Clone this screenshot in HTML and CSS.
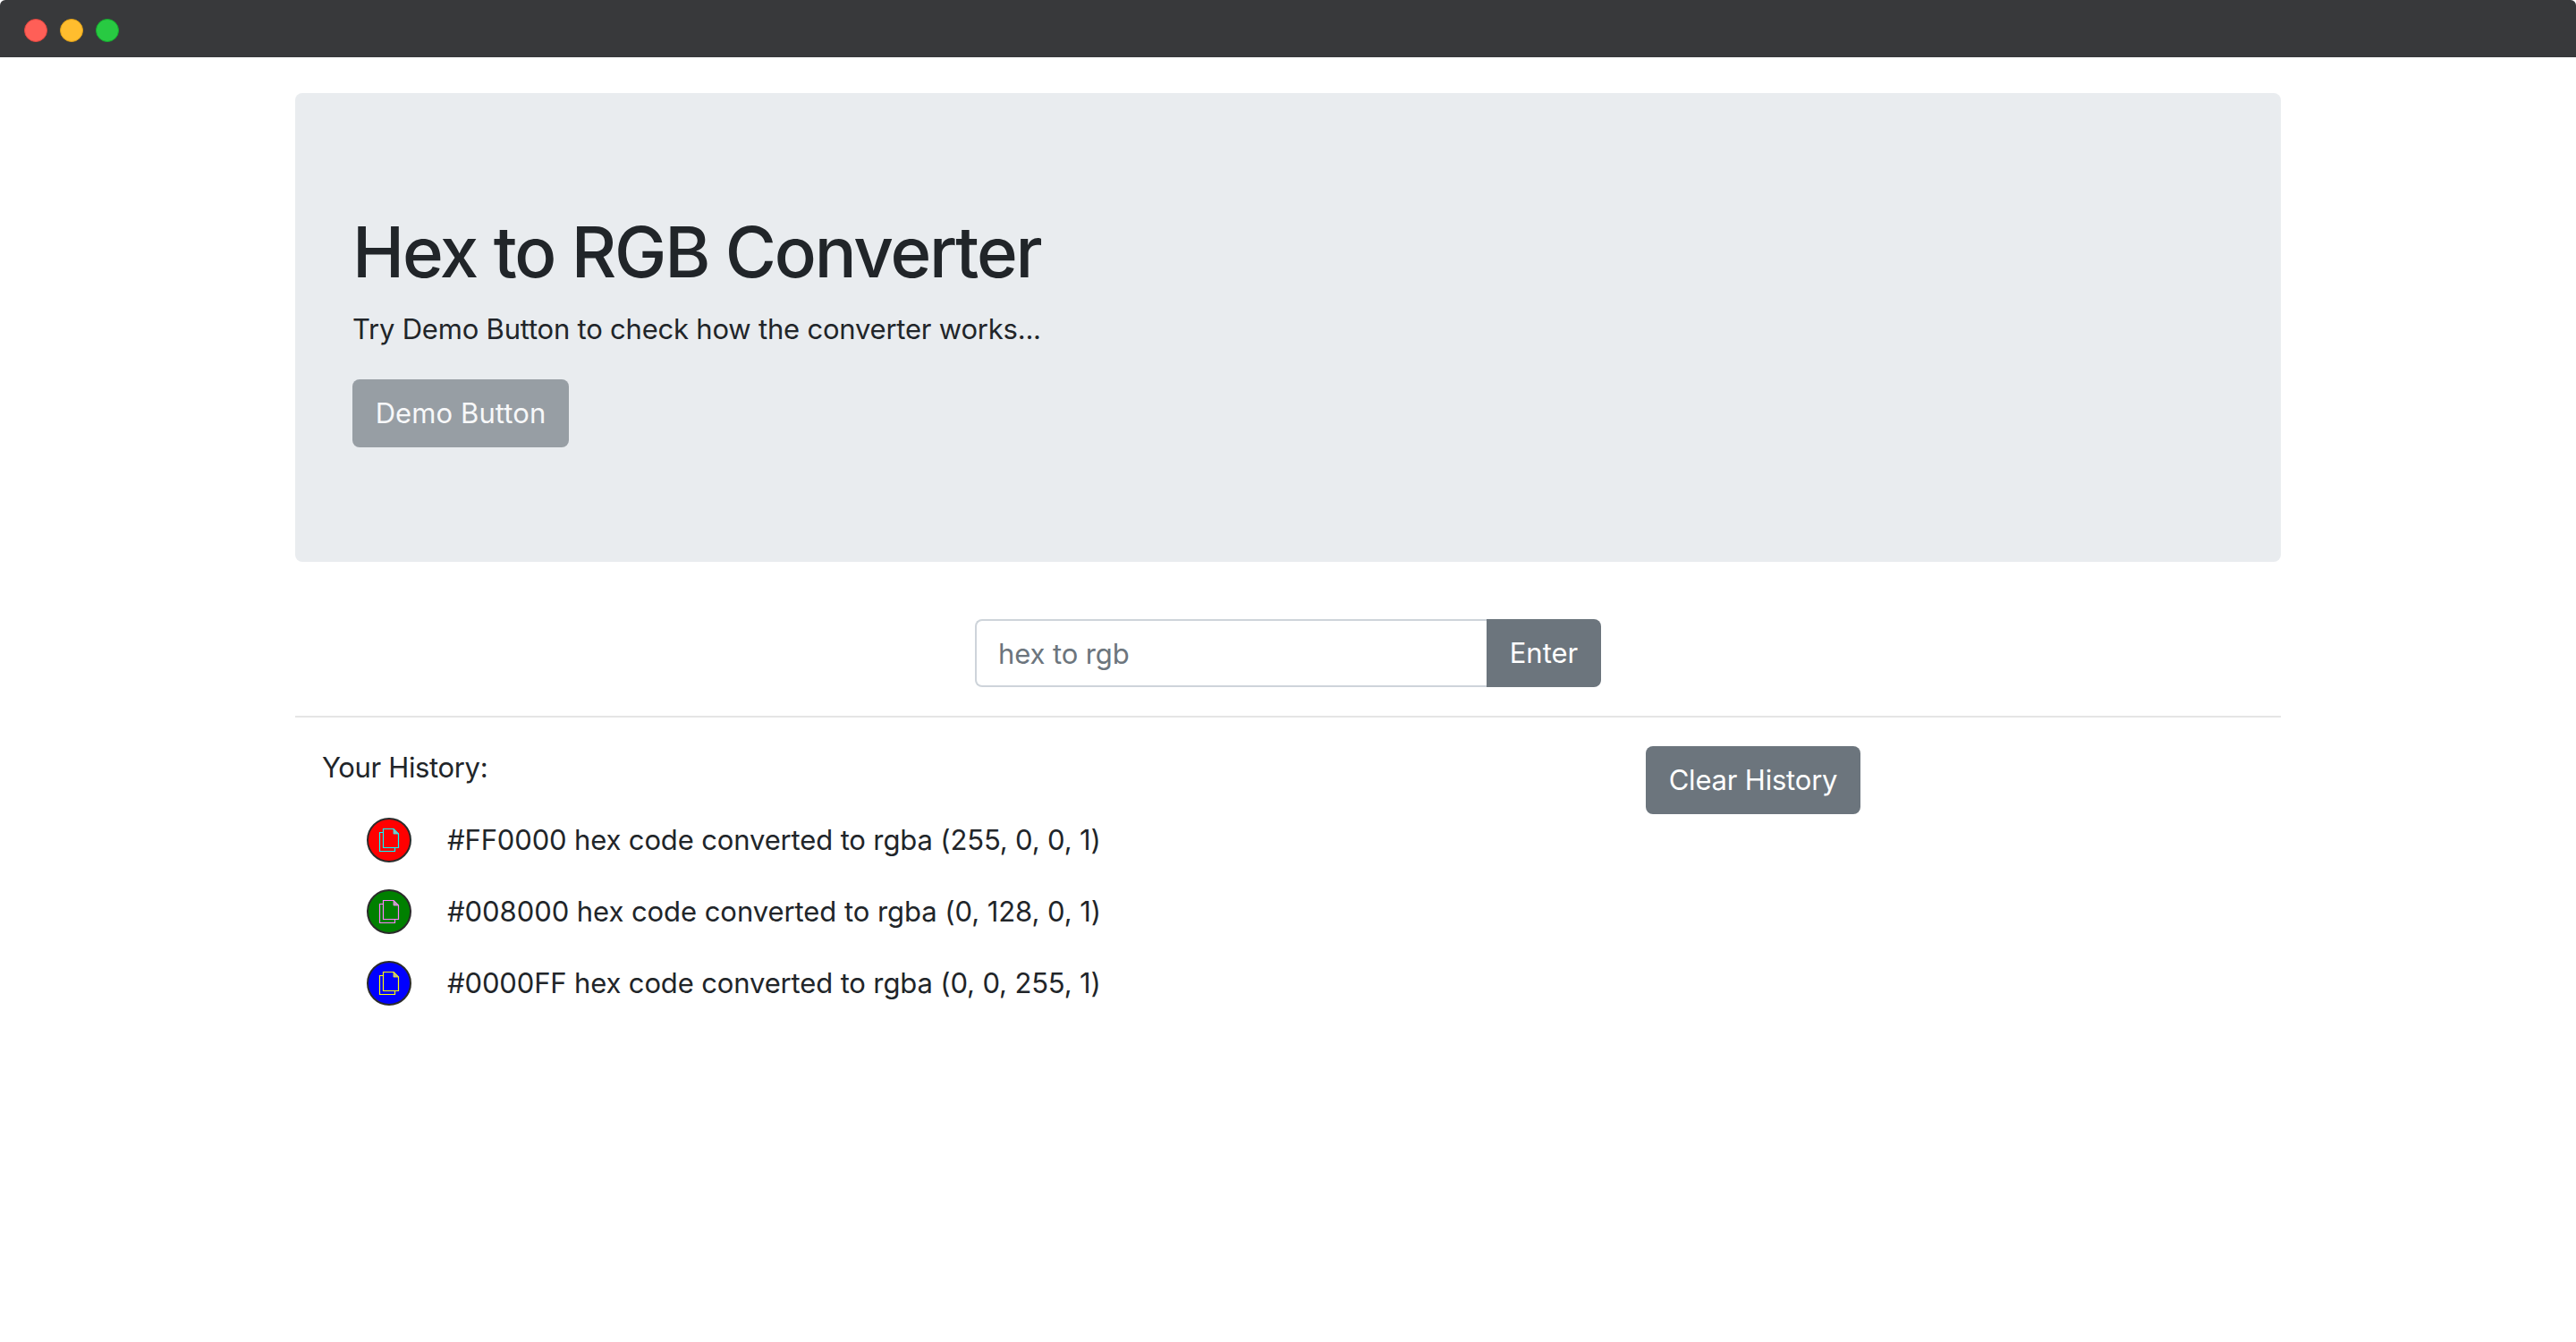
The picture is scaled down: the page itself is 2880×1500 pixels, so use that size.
FILE: index.html
```html
<!DOCTYPE html>
<html lang="en">
<head>
<meta charset="utf-8">
<title>Hex to RGB Converter</title>
<link rel="stylesheet" href="styles.css">
</head>
<body>
<header class="titlebar">
  <span class="dot dot-red"></span>
  <span class="dot dot-yellow"></span>
  <span class="dot dot-green"></span>
</header>
<main class="container">
  <section class="jumbotron">
    <h1 class="title">Hex to RGB Converter</h1>
    <p class="lead">Try Demo Button to check how the converter works...</p>
    <button class="btn btn-disabled" type="button">Demo Button</button>
  </section>
  <form class="converter">
    <input class="hex-input" type="text" placeholder="hex to rgb">
    <button class="btn btn-enter" type="button">Enter</button>
  </form>
  <hr class="divider">
  <section class="history-row">
    <div class="history">
      <p class="history-title">Your History:</p>
      <ul class="history-list">
        <li class="history-item">
          <span class="swatch swatch-red">
            <svg class="copy-icon" viewBox="0 0 24 28" width="24" height="28"><use href="#copy"></use></svg>
          </span>
          <span class="history-text">#FF0000 hex code converted to rgba (255, 0, 0, 1)</span>
        </li>
        <li class="history-item">
          <span class="swatch swatch-green">
            <svg class="copy-icon" viewBox="0 0 24 28" width="24" height="28"><use href="#copy"></use></svg>
          </span>
          <span class="history-text history-text-digits">#008000 hex code converted to rgba (0, 128, 0, 1)</span>
        </li>
        <li class="history-item">
          <span class="swatch swatch-blue">
            <svg class="copy-icon" viewBox="0 0 24 28" width="24" height="28"><use href="#copy"></use></svg>
          </span>
          <span class="history-text">#0000FF hex code converted to rgba (0, 0, 255, 1)</span>
        </li>
      </ul>
    </div>
    <button class="btn btn-clear" type="button">Clear History</button>
  </section>
</main>
<svg class="sprite" width="0" height="0" aria-hidden="true">
  <symbol id="copy" viewBox="0 0 24 28">
    <path d="M5.5 5.5H1.5V26.5H18.5V22.5" fill="none" stroke="currentColor" stroke-width="1.2"/>
    <path d="M5.5 1.5H17L22.5 7V22.5H5.5Z" fill="none" stroke="currentColor" stroke-width="1.2"/>
    <path d="M17 1.5V7H22.5Z" fill="#b0b0b0" stroke="currentColor" stroke-width="0.8"/>
  </symbol>
</svg>
</body>
</html>
```

FILE: styles.css
```css
* { box-sizing: border-box; }

html, body {
  margin: 0;
  height: 100%;
  background: #fff;
}

body {
  font-family: Inter, "Liberation Sans", sans-serif;
  font-size: 31px;
  line-height: 48px;
  color: #212529;
  overflow: hidden;
}

.titlebar {
  display: flex;
  align-items: center;
  gap: 14px;
  height: 64px;
  padding: 4px 0 0 27px;
  background: #38393b;
  border-radius: 6px 6px 0 0;
}

.dot {
  width: 26px;
  height: 26px;
  border-radius: 50%;
  border: 1px solid;
}
.dot-red { background: #ff5f57; border-color: #e2463f; }
.dot-yellow { background: #ffbd2e; border-color: #e1a116; }
.dot-green { background: #28ca42; border-color: #14ae2e; }

.container {
  width: 2220px;
  margin: 40px auto 0;
}

.jumbotron {
  height: 524px;
  padding: 128px 64px;
  margin-bottom: 64px;
  background: #e9ecef;
  border-radius: 8px;
}

.title {
  margin: 0 0 13px;
  font-size: 78px;
  line-height: 99px;
  font-weight: 500;
  letter-spacing: -2.2px;
}

.lead {
  margin: 0 0 32px;
  letter-spacing: -0.21px;
}

.btn {
  height: 76px;
  padding: 0 26px;
  border: 0;
  border-radius: 8px;
  background: #6c757d;
  color: #fff;
  font: inherit;
  white-space: nowrap;
}

.btn-disabled {
  width: 242px;
  padding: 0;
  letter-spacing: 0.1px;
  opacity: 0.65;
}

.converter {
  display: flex;
  width: 700px;
  margin: 0 auto;
}

.hex-input {
  flex: 1;
  min-width: 0;
  height: 76px;
  padding: 0 24px;
  border: 2px solid #ced4da;
  border-right: 0;
  border-radius: 8px 0 0 8px;
  background: #fff;
  color: #495057;
  font: inherit;
  letter-spacing: -0.1px;
  outline: none;
}
.hex-input::placeholder { color: #6c757d; opacity: 1; }

.btn-enter {
  width: 128px;
  padding: 0;
  border-radius: 0 8px 8px 0;
}

.divider {
  height: 2px;
  margin: 32px 0;
  border: 0;
  background: #e5e5e5;
}

.history-row {
  display: flex;
  align-items: flex-start;
}

.history {
  width: 1480px;
  margin-right: 30px;
  padding-left: 30px;
}

.history-title {
  margin: 0 0 17px;
  letter-spacing: -0.35px;
}

.history-list {
  margin: 0;
  padding: 0 0 0 50px;
  list-style: none;
}

.history-item {
  display: flex;
  align-items: center;
  gap: 40px;
  height: 80px;
  letter-spacing: -0.14px;
}

.history-text-digits { letter-spacing: -0.06px; }

.swatch {
  display: flex;
  align-items: center;
  justify-content: center;
  width: 50px;
  height: 50px;
  border: 2px solid #2b2b2b;
  border-radius: 50%;
}
.swatch-red { background: #f00; color: #0ff; }
.swatch-green { background: #008000; color: #ff7fff; }
.swatch-blue { background: #00f; color: #ff0; }

.copy-icon { display: block; }

.btn-clear {
  width: 240px;
  padding: 0;
  letter-spacing: -0.2px;
}

.sprite {
  position: absolute;
}
```
